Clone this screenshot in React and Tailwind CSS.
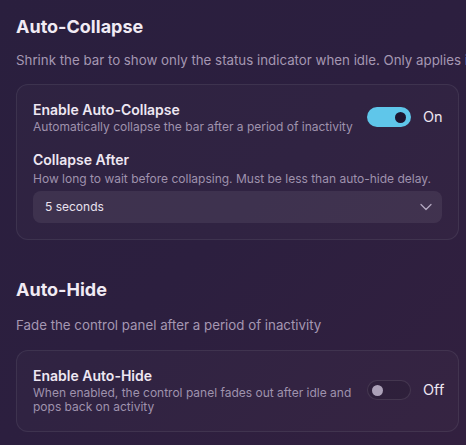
import React, { useState } from "react";
import { ChevronDown } from "lucide-react";

const Toggle = ({ on, onChange }) => (
  <button
    type="button"
    onClick={() => onChange(!on)}
    className={`relative flex h-5 w-11 shrink-0 items-center rounded-full border ${
      on ? "border-transparent bg-[#5fc6ea]" : "border-white/10 bg-black/10"
    }`}
  >
    <span
      className={`absolute h-[11px] w-[11px] rounded-full ${
        on ? "right-[4px] bg-[#1d1530]" : "left-[4px] bg-[#aca1b8]"
      }`}
    />
  </button>
);

const SettingRow = ({ title, hint, on, onChange }) => (
  <div className="flex items-center justify-between">
    <div className="min-w-0 flex-1 pr-3">
      <div className="text-[14px] font-semibold leading-5 text-[#eee7f2]">{title}</div>
      <div className="text-[12px] leading-[14px] text-[#9f92ad]">{hint}</div>
    </div>
    <div className="flex items-center gap-3">
      <Toggle on={on} onChange={onChange} />
      <span className="w-[19px] whitespace-nowrap text-[14.5px] text-[#eee7f2]">{on ? "On" : "Off"}</span>
    </div>
  </div>
);

export default function App() {
  const [collapse, setCollapse] = useState(true);
  const [hide, setHide] = useState(false);
  const [delay, setDelay] = useState("5 seconds");

  return (
    <div
      className="h-[445px] w-[466px] overflow-hidden bg-gradient-to-br from-[#2a1f3e] via-[#2c1f3f] to-[#32203f] px-4 pt-[15px]"
      style={{ fontFamily: "Inter, 'Noto Sans', sans-serif" }}
    >
      {/* Auto-Collapse */}
      <section>
        <h2 className="text-[18px] font-bold leading-6 text-[#f1ebf4]">Auto-Collapse</h2>
        <p className="mt-[11px] whitespace-nowrap text-[13.3px] leading-5 text-[#a597b2]">
          Shrink the bar to show only the status indicator when idle. Only applies in compact mode.
        </p>
        <div className="mt-[14px] w-[443px] rounded-xl border border-white/[0.07] bg-white/[0.02] px-4 pb-[16px] pt-[15px]">
          <SettingRow
            title="Enable Auto-Collapse"
            hint="Automatically collapse the bar after a period of inactivity"
            on={collapse}
            onChange={setCollapse}
          />
          <div className="mt-[16px] text-[14px] font-semibold leading-5 text-[#eee7f2]">Collapse After</div>
          <div className="mt-[1px] text-[12px] leading-[16px] text-[#9f92ad]">
            How long to wait before collapsing. Must be less than auto-hide delay.
          </div>
          <div className="relative mt-[4px]">
            <select
              value={delay}
              onChange={(e) => setDelay(e.target.value)}
              className="h-8 w-full appearance-none rounded-lg bg-white/[0.07] pl-3 text-[12px] text-[#e9e2ee] outline-none"
            >
              <option>3 seconds</option>
              <option>5 seconds</option>
              <option>10 seconds</option>
            </select>
            <ChevronDown
              strokeWidth={1.5}
              className="pointer-events-none absolute right-[6px] top-1/2 h-5 w-5 -translate-y-1/2 text-[#b3a8c0]"
            />
          </div>
        </div>
      </section>

      {/* Auto-Hide */}
      <section className="mt-[38px]">
        <h2 className="text-[18px] font-bold leading-6 text-[#f1ebf4]">Auto-Hide</h2>
        <p className="mt-[13px] whitespace-nowrap text-[13.3px] leading-5 text-[#a597b2]">
          Fade the control panel after a period of inactivity
        </p>
        <div className="mt-[15px] w-[443px] rounded-xl border border-white/[0.07] bg-white/[0.02] px-4 pb-[17px] pt-[15px]">
          <SettingRow
            title="Enable Auto-Hide"
            hint="When enabled, the control panel fades out after idle and pops back on activity"
            on={hide}
            onChange={setHide}
          />
        </div>
      </section>
    </div>
  );
}
